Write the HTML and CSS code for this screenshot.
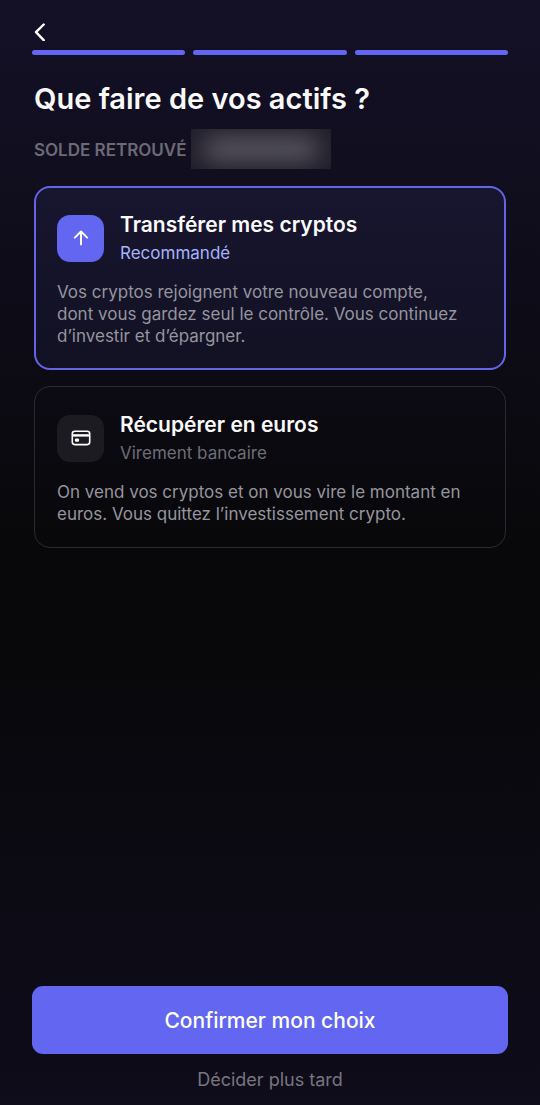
FILE: index.html
```
<!DOCTYPE html>
<html lang="fr">
<head>
  <meta charset="utf-8">
  <meta name="viewport" content="width=device-width, initial-scale=1">
  <title>Que faire de vos actifs ?</title>
  <link rel="stylesheet" href="styles.css">
</head>
<body>
  <form class="screen">
    <header class="top">
      <button class="back" type="button" aria-label="Retour">
        <svg width="12" height="20" viewBox="0 0 12 20" fill="none" stroke="currentColor" stroke-width="2.4" stroke-linecap="round" stroke-linejoin="round">
          <path d="M9.7 3.5 2 11.2l7.7 8"/>
        </svg>
      </button>
      <div class="steps">
        <span class="step"></span>
        <span class="step"></span>
        <span class="step"></span>
      </div>
    </header>

    <main class="content">
      <h1>Que faire de vos actifs ?</h1>
      <div class="balance">
        <span class="balance-label">SOLDE RETROUVÉ</span>
        <span class="balance-hidden"></span>
      </div>

      <div class="choices">
        <label class="card">
          <input class="card-radio" type="radio" name="choice" value="transfer" checked>
          <span class="card-head">
            <span class="card-icon">
              <svg width="24" height="24" viewBox="0 0 24 24" fill="none" stroke="currentColor" stroke-width="1.9" stroke-linecap="round" stroke-linejoin="round">
                <path d="M12 18.5V5.5M5.8 11.7 12 5.5l6.2 6.2"/>
              </svg>
            </span>
            <span>
              <span class="card-title">Transférer mes cryptos</span>
              <span class="card-sub">Recommandé</span>
            </span>
          </span>
          <span class="card-text">Vos cryptos rejoignent votre nouveau compte, dont vous gardez seul le contrôle. Vous continuez d’investir et d’épargner.</span>
        </label>

        <label class="card">
          <input class="card-radio" type="radio" name="choice" value="euros">
          <span class="card-head">
            <span class="card-icon">
              <svg width="24" height="24" viewBox="0 0 24 24" fill="none" stroke="currentColor" stroke-width="1.6">
                <rect x="3.3" y="5.2" width="17.4" height="13.4" rx="2.5"/>
                <path d="M3.3 9.4h17.4" stroke-width="2.4"/>
                <rect x="6.7" y="13.3" width="2.6" height="1.6" rx=".4" fill="currentColor"/>
              </svg>
            </span>
            <span>
              <span class="card-title">Récupérer en euros</span>
              <span class="card-sub">Virement bancaire</span>
            </span>
          </span>
          <span class="card-text">On vend vos cryptos et on vous vire le montant en euros. Vous quittez l’investissement crypto.</span>
        </label>
      </div>
    </main>

    <footer class="actions">
      <button class="confirm" type="submit">Confirmer mon choix</button>
      <button class="later" type="button">Décider plus tard</button>
    </footer>
  </form>
</body>
</html>
```
FILE: styles.css
```
* {
  box-sizing: border-box;
}

body {
  margin: 0;
  font-family: Inter, "Liberation Sans", sans-serif;
  color: #fafafa;
  background: #08080a;
}

button {
  padding: 0;
  border: none;
  background: none;
  font-family: inherit;
  cursor: pointer;
}

.screen {
  display: flex;
  flex-direction: column;
  min-height: 100vh;
  padding: 20px 32px 11px;
  background: linear-gradient(#141026 0%, #110e1f 15%, #08080a 50%, #08080a 58%, #0f0c1b 100%);
}

.back {
  display: block;
  width: 16px;
  height: 22px;
  margin-left: 2px;
  color: #fff;
}

.back svg {
  display: block;
}

.steps {
  display: flex;
  gap: 8px;
  margin-top: 8px;
}

.step {
  flex: 1;
  height: 5px;
  border-radius: 3px;
  background: #6366f1;
}

.content {
  flex: 1;
  padding: 26px 2px;
}

h1 {
  margin: 0;
  font-size: 29px;
  line-height: 36px;
  font-weight: 600;
}

.balance {
  display: flex;
  align-items: center;
  gap: 4px;
  margin-top: 12px;
}

.balance-label {
  padding-top: 2px;
  font-size: 17px;
  font-weight: 600;
  color: #6c6a76;
}

/* amount kept out of sight */
.balance-hidden {
  display: flex;
  align-items: center;
  justify-content: center;
  width: 140px;
  height: 40px;
  overflow: hidden;
  background: #211e2b;
}

.balance-hidden::before {
  content: "";
  width: 116px;
  height: 22px;
  border-radius: 9px;
  background: #605e67;
  filter: blur(12px);
}

.choices {
  display: flex;
  flex-direction: column;
  gap: 16px;
  margin-top: 17px;
}

.card {
  position: relative;
  padding: 22px;
  border: 1px solid #2a2a30;
  border-radius: 16px;
  cursor: pointer;
}

.card:has(.card-radio:checked) {
  padding: 21px;
  border: 2px solid #6366e4;
  background: linear-gradient(#18152f, #121123);
}

/* the whole card acts as the radio */
.card-radio {
  position: absolute;
  inset: 0;
  margin: 0;
  appearance: none;
  border-radius: 14px;
  cursor: pointer;
}

.card-head {
  display: flex;
  align-items: center;
  gap: 16px;
  margin-bottom: 14px;
}

.card-icon {
  display: flex;
  align-items: center;
  justify-content: center;
  width: 47px;
  height: 47px;
  border-radius: 13px;
  color: #fff;
  background: #1c1b21;
}

.card-title,
.card-sub,
.card-text {
  display: block;
}

.card-title {
  padding-top: 2px;
  font-size: 21px;
  line-height: 28px;
  font-weight: 600;
}

.card-sub {
  font-size: 17px;
  line-height: 28px;
  color: #6e6e76;
}

.card-text {
  padding-right: 20px;
  font-size: 17px;
  line-height: 22px;
  color: #96959e;
}

.card-radio:checked + .card-head .card-icon {
  background: #6366f1;
}

.card-radio:checked + .card-head .card-sub {
  color: #a5b4fc;
}

.confirm,
.later {
  display: block;
}

.confirm {
  width: 100%;
  height: 68px;
  border-radius: 11px;
  font-size: 21px;
  font-weight: 500;
  color: #fff;
  background: #6366f1;
}

.later {
  margin: 12px auto 0;
  font-size: 18px;
  line-height: 28px;
  color: #77757f;
}
```
